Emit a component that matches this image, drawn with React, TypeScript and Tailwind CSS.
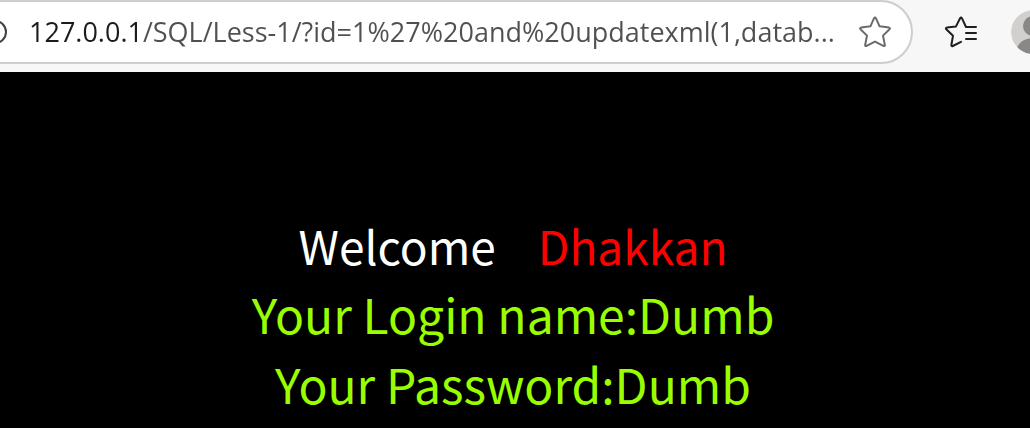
import { useState } from "react";

const PAGE_URL = "127.0.0.1/SQL/Less-1/?id=1%27%20and%20updatexml(1,datab...";

function InfoIcon() {
  return (
    <svg viewBox="0 0 24 24" className="size-6" fill="none" stroke="#404040" strokeWidth="2">
      <circle cx="12" cy="12" r="11" />
      <path d="M12 11v6M12 7v1" />
    </svg>
  );
}

function StarIcon() {
  return (
    <svg viewBox="0 0 32 32" className="size-8" fill="none" stroke="#6b6b6b" strokeWidth="2" strokeLinejoin="round">
      <path d="M15.1 2.2Q16 .7 16.9 2.2L20.6 10.3L30 11.6Q31.6 12 30.5 13.2L24 19.6L25.8 28.8Q26 30.6 24.4 29.9L16 25.6L7.6 29.9Q6 30.6 6.2 28.8L8 19.6L1.5 13.2Q.4 12 2 11.6L11.4 10.3Z" />
    </svg>
  );
}

function FavoritesIcon() {
  return (
    <svg
      viewBox="0 0 34 32"
      className="h-8 w-[34px]"
      fill="none"
      stroke="#1f1f1f"
      strokeWidth="2"
      strokeLinecap="round"
      strokeLinejoin="round"
    >
      <path d="M17 25.8L8.8 30Q7.2 30.6 7.4 28.8L9 19.8L2.3 13.2Q1.2 12 2.8 11.6L12 10.4L16.1 2.2Q17 .7 17.9 2.2L22 11H32" />
      <path d="M22 17H32M22 23H32" />
    </svg>
  );
}

function Avatar() {
  return (
    <svg viewBox="0 0 44 44" className="size-11 rounded-full">
      <circle cx="22" cy="22" r="22" fill="#d2d0ce" />
      <circle cx="22" cy="16" r="10" fill="#8a8886" />
      <path d="M5 44C5 34 12 28 22 28S39 34 39 44Z" fill="#8a8886" />
    </svg>
  );
}

function AddressBar() {
  const [url, setUrl] = useState(PAGE_URL);

  return (
    <div className="-ml-8 flex h-16 min-w-0 flex-1 items-center rounded-full border-2 border-[#cdcdcd] bg-white pr-5 pl-[13px]">
      <button type="button" aria-label="Site information" className="shrink-0">
        <InfoIcon />
      </button>
      <input
        type="text"
        aria-label="Address"
        value={url}
        onChange={(e) => setUrl(e.target.value)}
        className="ml-[22px] h-10 min-w-0 flex-1 truncate bg-[linear-gradient(90deg,#1b1b1b_112px,#505050_112px)] bg-clip-text font-['Open_Sans','Noto_Sans',sans-serif] text-[27px] text-transparent caret-black outline-none"
      />
      <button type="button" aria-label="Add to favorites" className="ml-4 shrink-0">
        <StarIcon />
      </button>
    </div>
  );
}

export default function App() {
  return (
    <div className="min-h-screen overflow-hidden bg-black">
      <header className="flex h-[72px] items-start bg-[#f7f7f7]">
        <AddressBar />
        <div className="-mr-[25px] ml-[31px] flex h-16 shrink-0 items-center gap-[33px]">
          <button type="button" aria-label="Favorites">
            <FavoritesIcon />
          </button>
          <button type="button" aria-label="Profile">
            <Avatar />
          </button>
        </div>
      </header>

      <main className="pt-[140px] pr-1 text-center font-['Noto_Sans_CJK_SC',sans-serif] text-[48px] leading-[70px]">
        <h1 className="flex justify-center gap-[42px] text-[46px] leading-[66px] text-white">
          <span>Welcome</span>
          <span className="text-[#ff0000]">Dhakkan</span>
        </h1>
        <p className="text-[#99ff00]">Your Login name:Dumb</p>
        <p className="text-[#99ff00]">Your Password:Dumb</p>
      </main>
    </div>
  );
}
